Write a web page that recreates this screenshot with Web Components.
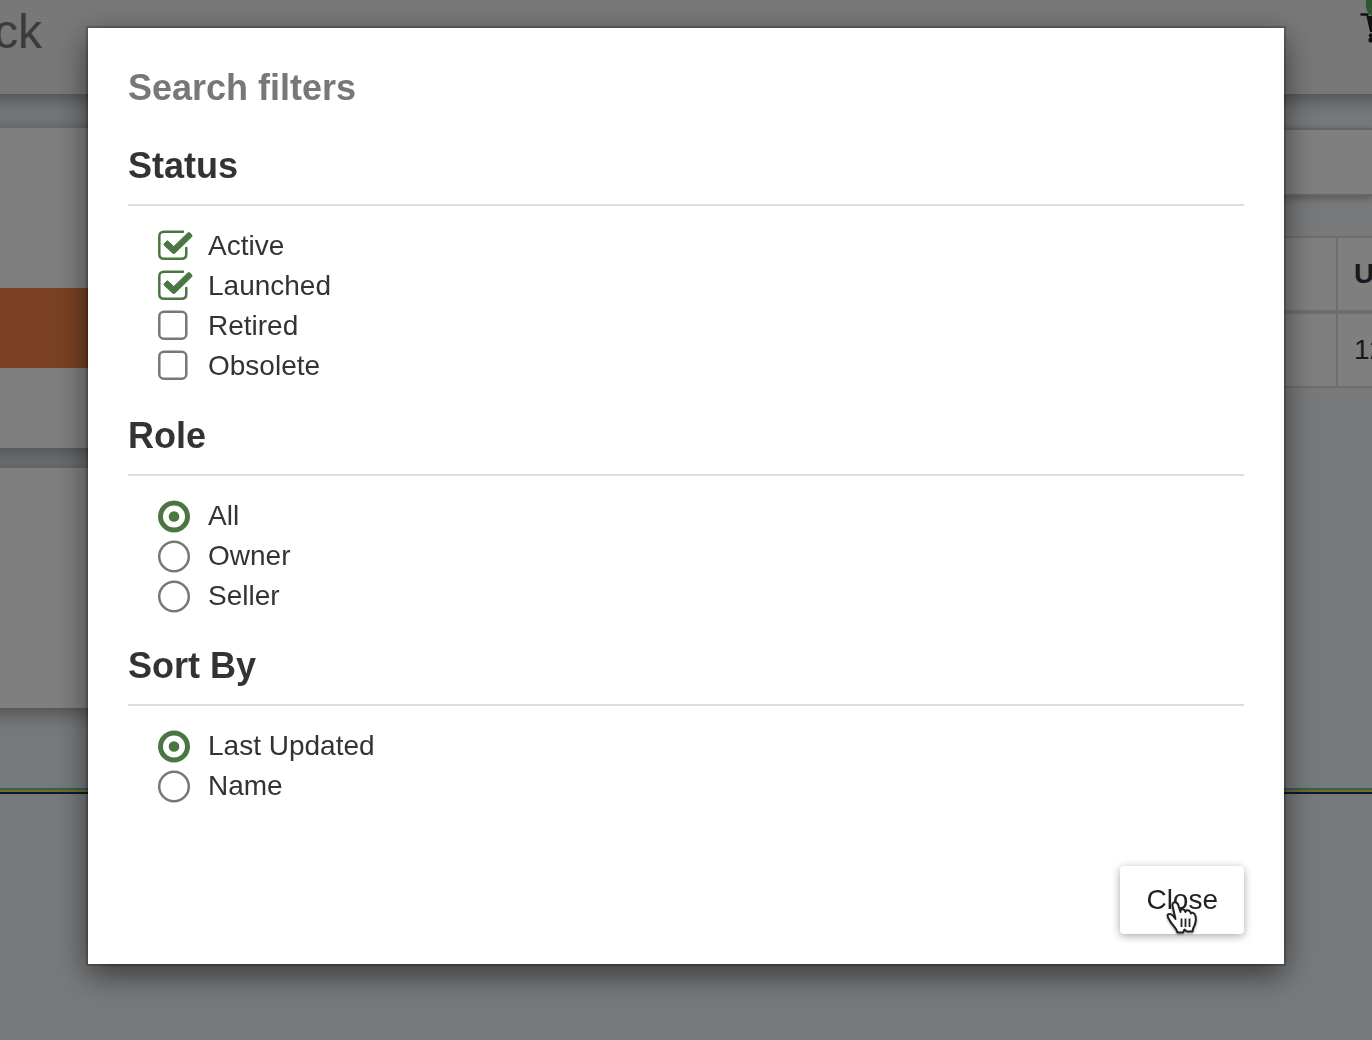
<!DOCTYPE html>
<html lang="en">
<head>
<meta charset="utf-8">
<title>Search filters</title>
<style>
  html, body { margin: 0; height: 100%; overflow: hidden; }
  body { font-family: "Liberation Sans", Arial, sans-serif; font-size: 28px; line-height: 40px; color: #333; }
</style>
</head>
<body>
<app-page>
  <app-header slot="header">ck</app-header>
  <side-card slot="side" class="menu"></side-card>
  <side-card slot="side" plain></side-card>
  <result-list slot="main"></result-list>
</app-page>
<modal-dialog>
  <span slot="title">Search filters</span>
  <filter-group type="checkbox" name="status">
    <span slot="heading">Status</span>
    <span data-option data-checked>Active</span>
    <span data-option data-checked>Launched</span>
    <span data-option>Retired</span>
    <span data-option>Obsolete</span>
  </filter-group>
  <filter-group type="radio" name="role">
    <span slot="heading">Role</span>
    <span data-option data-checked>All</span>
    <span data-option>Owner</span>
    <span data-option>Seller</span>
  </filter-group>
  <filter-group type="radio" name="sort">
    <span slot="heading">Sort By</span>
    <span data-option data-checked>Last Updated</span>
    <span data-option>Name</span>
  </filter-group>
  <raised-button slot="actions">Close</raised-button>
</modal-dialog>

<script>
class BaseElement extends HTMLElement {
  constructor() {
    super();
    this.attachShadow({ mode: 'open' }).innerHTML =
      '<style>*{box-sizing:border-box}' + this.constructor.css + '</style>' + this.constructor.html;
  }
}

class AppPage extends BaseElement {
  static css = `
    :host { display: block; min-height: 100vh; background: #eff2f5; overflow: hidden; }
    main { display: grid; grid-template-columns: 30% 1fr; gap: 40px; padding-top: 34px; padding-bottom: 80px; }
    .side { display: grid; gap: 20px; align-content: start; margin-left: -40px; }
    .stripes div { height: 2px; background: #6cbcc0; }
    .stripes div:nth-child(2) { background: #e4d840; }
    .stripes div:nth-child(3) { background: #183460; }`;
  static html = `
    <slot name="header"></slot>
    <main><div class="side"><slot name="side"></slot></div><slot name="main"></slot></main>
    <div class="stripes"><div></div><div></div><div></div></div>`;
}

class AppHeader extends BaseElement {
  static css = `
    :host { display: flex; justify-content: space-between; align-items: flex-start; height: 94px; margin: 0 -40px; padding: 0 40px;
      background: #f1f1f1; box-shadow: 0 4px 20px rgba(0,0,0,.4); color: #777; font-size: 48px; line-height: 64px; }
    .name { margin-left: -6px; }
    svg { display: block; flex: none; width: 12px; height: 44px; }`;
  static html = `
    <span class="name"><slot></slot></span>
    <svg viewBox="0 0 12 44" aria-hidden="true">
      <path d="M1.500 14.500H7.500" stroke="#222" stroke-width="2.500" stroke-linecap="round"/>
      <path d="M6 14L8.500 16H12V32H10Z" fill="#222"/>
      <circle cx="11" cy="35.500" r="2.200" fill="#222"/><circle cx="11" cy="40" r="2.600" fill="#222"/>
      <path d="M6 0H12V16Q6 13 6 5Z" fill="#5cae57"/>
    </svg>`;
}

class SideCard extends BaseElement {
  static css = `
    :host { display: grid; grid-template-rows: 160px 80px 80px; background: #fff; box-shadow: 0 4px 20px rgba(0,0,0,.4); }
    :host([plain]) { grid-template-rows: 240px; }
    .current { grid-row: 2; background: #f48444; }
    :host([plain]) .current { display: none; }`;
  static html = `<div class="current"></div>`;
}

class ResultList extends BaseElement {
  static css = `
    :host { display: block; min-width: 0; }
    input { display: block; width: 100%; height: 68px; border: 2px solid #ccc; border-width: 2px 0; background: #fff; outline: 0;
      box-shadow: 0 2px 8px rgba(0,0,0,.3); margin-bottom: 40px; }
    table { width: 100%; border-collapse: separate; border-spacing: 0; table-layout: fixed; background: #fff; color: #333;
      border-top: 2px solid #dcdcdc; border-left: 2px solid #dcdcdc; }
    th, td { padding: 0 0 0 16px; text-align: left; white-space: nowrap; }
    th { height: 76px; border-bottom: 4px solid #dcdcdc; }
    td { height: 74px; border-bottom: 2px solid #dcdcdc; }
    th:last-child, td:last-child { border-left: 2px solid #dcdcdc; }
    th:last-child { width: 36px; }`;
  static html = `
    <input type="search" aria-label="Search">
    <table><thead><tr><th></th><th>U</th></tr></thead><tbody><tr><td></td><td>12</td></tr></tbody></table>`;
}

class ModalDialog extends BaseElement {
  static css = `
    :host { position: fixed; inset: 0; z-index: 10; display: flex; align-items: flex-start; padding: 28px 88px; background: rgba(0,0,0,.5); }
    .panel { flex: 1; display: flex; flex-direction: column; padding: 40px 40px 30px; background: #fff;
      box-shadow: 0 0 0 2px rgba(0,0,0,.2), 0 10px 30px rgba(0,0,0,.55); }
    h1 { margin: 0 0 38px; font-size: 36px; line-height: 40px; color: #777; }
    .groups { display: grid; gap: 30px; }
    footer { display: flex; justify-content: flex-end; margin-top: 60px; }`;
  static html = `
    <div class="panel" role="dialog" aria-modal="true" aria-labelledby="title">
      <h1 id="title"><slot name="title"></slot></h1>
      <div class="groups"><slot></slot></div>
      <footer><slot name="actions"></slot></footer>
    </div>`;
}

const CHECK_ICON = `
  <svg viewBox="0 0 36 40" aria-hidden="true">
    <rect class="off" x="1.300" y="5.800" width="27" height="27" rx="4.500"/>
    <path class="on line" d="M25 5.800H6Q1.300 5.800 1.300 10.500V28Q1.300 32.800 6 32.800H23.500Q28.300 32.800 28.300 28V22"/>
    <path class="on" d="M6.500 17.200L9.500 14.700L15.800 20.500L29.500 7.200Q31 6 32.200 7.200L33.500 8.500Q34.500 9.800 33.500 11L17 27Q15.800 28.200 14.500 27L6.500 19.500Q5.400 18.300 6.500 17.200Z" fill="#4a7741" stroke="#4a7741" stroke-linejoin="round"/>
  </svg>`;
const RADIO_ICON = `
  <svg viewBox="0 0 36 40" aria-hidden="true">
    <circle class="off" cx="16" cy="20.500" r="14.800"/>
    <circle class="on" cx="16" cy="20.500" r="13.500" fill="none" stroke="#4a7741" stroke-width="5"/>
    <circle class="on" cx="16" cy="20.500" r="5.300" fill="#4a7741"/>
  </svg>`;

class FilterGroup extends BaseElement {
  static css = `
    :host { display: block; }
    h2 { margin: 0 0 20px; padding-bottom: 18px; border-bottom: 2px solid #ddd; font-size: 36px; line-height: 40px; }
    .options { display: grid; justify-items: start; padding-left: 30px; }
    label { display: grid; grid-template-columns: 36px auto; column-gap: 14px; height: 40px; cursor: pointer; }
    input { grid-area: 1 / 1; width: 36px; height: 40px; margin: 0; opacity: 0; cursor: pointer; }
    svg { grid-area: 1 / 1; width: 36px; height: 40px; pointer-events: none; }
    .off { fill: #fff; stroke: #777; stroke-width: 2.500; }
    .line { fill: none; stroke: #4a7741; stroke-width: 2.500; stroke-linecap: round; }
    .on, input:checked + svg .off { display: none; }
    input:checked + svg .on { display: inline; }
    input:focus-visible + svg { outline: 2px solid #4a7741; }`;
  static html = `
    <section role="group" aria-labelledby="heading">
      <h2 id="heading"><slot name="heading"></slot></h2>
      <div class="options"></div>
    </section>`;
  connectedCallback() {
    const box = this.shadowRoot.querySelector('.options');
    if (box.children.length) return;
    const type = this.getAttribute('type');
    this.querySelectorAll('[data-option]').forEach((option, i) => {
      option.slot = 'option-' + i;
      const label = document.createElement('label');
      label.innerHTML = `<input type="${type}" name="${this.getAttribute('name')}">` +
        (type === 'radio' ? RADIO_ICON : CHECK_ICON) + `<span><slot name="option-${i}"></slot></span>`;
      label.querySelector('input').checked = option.hasAttribute('data-checked');
      box.append(label);
    });
  }
}

class RaisedButton extends BaseElement {
  static css = `
    :host { display: block; position: relative; }
    button { display: block; padding: 14px 26px; border: 0; border-radius: 4px; background: #fff; color: #222;
      font: inherit; box-shadow: 0 2px 8px rgba(0,0,0,.35); cursor: pointer; }
    svg { position: absolute; left: 46px; top: 34px; width: 32px; height: 36px; pointer-events: none;
      filter: drop-shadow(0 1px 1px rgba(0,0,0,.4)); }`;
  static html = `
    <button type="button"><slot></slot></button>
    <svg viewBox="0 0 32 36" aria-hidden="true">
      <path d="M11.500 32.500C10.500 28 6 25 3.500 20C1.500 17 1 15.500 2 14.500C4 13 6.500 14.500 9.500 19L7 8C6 4.500 6.500 2.500 8.500 2.200C10.500 2 12 3.500 12.500 6L14.500 12C14 10 15 9 17 9.200C18.500 9.500 19 10.500 19.500 12C19.500 10.500 21 10 22.500 10.500C24 11 24.500 12 25 13.500C25.500 12.500 27 12.500 28.500 14C30.500 16.500 30 22 28.500 25.500C27.500 27.500 26.500 28.500 26.500 31.500H21L18.500 29.500L17 32.500Z" fill="#fff" stroke="#222" stroke-width="2" stroke-linejoin="round"/>
      <path d="M15.500 18.500V27M19.500 18.500V27M23.500 18.500V27" stroke="#222" stroke-width="1.800"/>
    </svg>`;
}

customElements.define('app-page', AppPage);
customElements.define('app-header', AppHeader);
customElements.define('side-card', SideCard);
customElements.define('result-list', ResultList);
customElements.define('modal-dialog', ModalDialog);
customElements.define('filter-group', FilterGroup);
customElements.define('raised-button', RaisedButton);
</script>
</body>
</html>
